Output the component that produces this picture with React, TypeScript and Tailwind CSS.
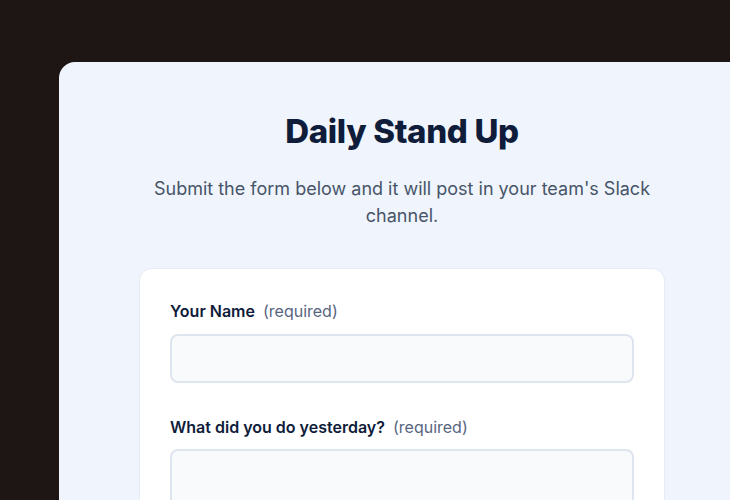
export default function App() {
  return (
    <div className="h-[500px] w-[730px] overflow-hidden bg-[#1e1615] pl-[59px] pt-[62px]" style={{ fontFamily: "Inter, 'Noto Sans', sans-serif" }}>
      <div className="w-[686px] rounded-tl-[16px] rounded-tr-[16px] bg-[#f0f4fc] pt-[49px] flex flex-col items-center min-h-[500px]">
        <h1 className="text-[33px] leading-[40px] font-extrabold tracking-[-0.01em] text-[#0f1c3a]">Daily Stand Up</h1>
        <p className="mt-[24px] w-[524px] text-center text-[18px] leading-[27px] text-[#475569]">
          Submit the form below and it will post in your team's Slack channel.
        </p>
        <div className="mt-[40px] w-[524px] rounded-[12px] bg-white px-[30px] pt-[31px] pb-[30px] shadow-[0_0_0_1px_rgba(226,232,240,0.5),0_1px_3px_rgba(15,23,42,0.04)]">
          <label className="block text-[16px] leading-[22px]">
            <span className="font-semibold text-[#0f1c3a]">Your Name</span>
            <span className="ml-[8px] text-[#586580]">(required)</span>
          </label>
          <input className="mt-[12px] block h-[49px] w-full rounded-[8px] border-2 border-[#dfe5ef] bg-[#f8fafc] px-3 outline-none" />
          <label className="mt-[33px] block text-[16px] leading-[22px]">
            <span className="font-semibold text-[#0f1c3a]">What did you do yesterday?</span>
            <span className="ml-[8px] text-[#586580]">(required)</span>
          </label>
          <textarea className="mt-[11px] block h-[100px] w-full rounded-[8px] border-2 border-[#dfe5ef] bg-[#f8fafc] px-3 outline-none" />
        </div>
      </div>
    </div>
  );
}
